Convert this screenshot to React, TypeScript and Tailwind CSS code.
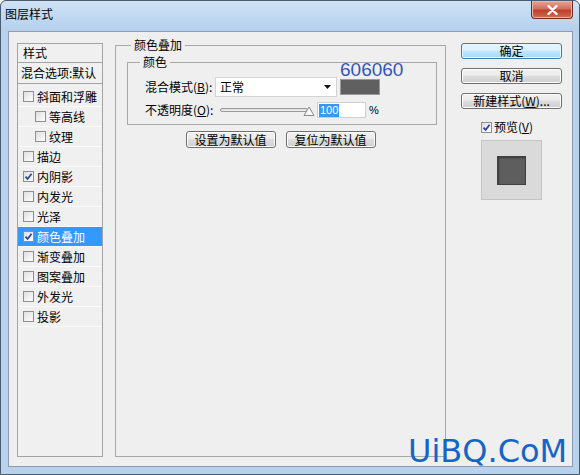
import clsx from "clsx";
import type { ReactNode } from "react";

const cjk = "font-['Noto_Sans_CJK_SC','Liberation_Sans',sans-serif]";

const styleRows = [
  { label: "斜面和浮雕" },
  { label: "等高线", indent: true },
  { label: "纹理", indent: true },
  { label: "描边" },
  { label: "内阴影", checked: true },
  { label: "内发光" },
  { label: "光泽" },
  { label: "颜色叠加", checked: true, active: true },
  { label: "渐变叠加" },
  { label: "图案叠加" },
  { label: "外发光" },
  { label: "投影" },
];

function Check({ checked }: { checked?: boolean }) {
  return (
    <span className="flex h-[11px] w-[11px] shrink-0 items-center justify-center border border-[#8f8f8f] bg-[linear-gradient(135deg,#dedede,#ffffff)]">
      {checked && (
        <svg width="9" height="9" viewBox="0 0 9 9">
          <path d="M1.5 4.6 L3.6 6.9 L7.6 1.8" fill="none" stroke="#23449a" strokeWidth="1.7" />
        </svg>
      )}
    </span>
  );
}

function Btn({ children, primary, className }: { children: ReactNode; primary?: boolean; className?: string }) {
  return (
    <button
      type="button"
      className={clsx(
        "flex items-center justify-center rounded-[3px] border text-[12px] leading-none text-black",
        primary
          ? "border-[#3c7fb1] bg-[linear-gradient(#eaf6fd,#d9f0fc_45%,#bee6fd_50%,#a7d9f5)] shadow-[inset_0_0_0_1px_#e6f6ff]"
          : "border-[#707070] bg-[linear-gradient(#f2f2f2,#ebebeb_45%,#dddddd_50%,#cfcfcf)] shadow-[inset_0_0_0_1px_#fcfcfc]",
        className
      )}
    >
      {children}
    </button>
  );
}

export default function App() {
  return (
    <div className={clsx("h-[475px] w-[580px] bg-white text-[12px] text-black", cjk)}>
      <div className="relative flex h-full flex-col rounded-t-[6px] border border-[#4b5b70] bg-[#b8d2ee]">
        {/* title bar */}
        <div className="h-[30px] shrink-0 rounded-t-[6px] bg-[linear-gradient(#cfe2f6,#bed7f1_60%,#b6d0ec)] pl-[4px] pt-[6px] leading-[14px] text-black">
          图层样式
        </div>
        <div className="absolute right-[6px] top-0 flex h-[18px] w-[42px] items-center justify-center rounded-b-[4px] border border-t-0 border-[#6b2a22] bg-[linear-gradient(#e8a493,#d2705e_45%,#c1402c_55%,#cf6a50)] shadow-[inset_0_0_0_1px_#f0b5a6]">
          <svg width="11" height="10" viewBox="0 0 11 10">
            <path d="M1.5 1 L9.5 9 M9.5 1 L1.5 9" stroke="#ffffff" strokeWidth="2.4" strokeLinecap="round" />
          </svg>
        </div>

        {/* client */}
        <div className="mb-[7px] ml-[7px] mr-[6px] flex flex-1 border border-[#8c9bb0] bg-[#efefef] pl-[8px] pt-[6px]">
          {/* style list */}
          <div className="mt-[5px] flex h-[414px] w-[86px] shrink-0 flex-col border border-[#a3a3a3] bg-[#f0f0f0]">
            <div className="flex h-[19px] items-center border-b border-[#a3a3a3] pl-[5px]">样式</div>
            <div className="flex h-[21px] items-center overflow-hidden whitespace-nowrap border-b border-[#a3a3a3] pl-[3px]">
              混合选项:默认
            </div>
            <div className="pt-[3px]">
              {styleRows.map((r) => (
                <div
                  key={r.label}
                  className={clsx(
                    "flex h-[20px] items-center gap-[3px] whitespace-nowrap border-b border-[#fafafa]",
                    r.indent ? "pl-[17px]" : "pl-[5px]",
                    r.active && "bg-[#3399ff] text-white"
                  )}
                >
                  <Check checked={r.checked} />
                  <span>{r.label}</span>
                </div>
              ))}
            </div>
          </div>

          {/* colour overlay group */}
          <fieldset className="ml-[12px] h-[419px] w-[331px] shrink-0 border border-[#a8a8a8]">
            <legend className="ml-[15px] px-[3px] leading-[14px]">颜色叠加</legend>
            <fieldset className="relative ml-[11px] mt-[3px] h-[70px] w-[310px] border border-[#a8a8a8]">
              <legend className="ml-[12px] px-[3px] leading-[14px]">颜色</legend>
              <div className="absolute left-[212px] top-[-9px] font-['Liberation_Sans',sans-serif] text-[19px] leading-none text-[#3556c0]">
                606060
              </div>
              <div className="mt-[8px] flex items-center pl-[17px]">
                <span className="w-[70px] whitespace-nowrap">
                  混合模式(<span className="underline">B</span>):
                </span>
                <div className="flex h-[20px] w-[122px] items-center justify-between border border-[#d4d4d4] bg-white pl-[4px] pr-[5px]">
                  <span>正常</span>
                  <svg width="7" height="4" viewBox="0 0 7 4">
                    <path d="M0 0 H7 L3.5 4 Z" fill="#111" />
                  </svg>
                </div>
                <div className="ml-[3px] h-[16px] w-[40px] border border-[#9a9a9a] bg-[#606060]" />
              </div>
              <div className="mt-[4px] flex items-center pl-[17px]">
                <span className="w-[73px] whitespace-nowrap">
                  不透明度(<span className="underline">O</span>):
                </span>
                <div className="relative h-[15px] w-[97px]">
                  <div className="absolute left-[2px] top-[5px] h-[4px] w-[88px] rounded-full border border-[#9a9a9a] bg-[linear-gradient(#d8d8d8,#f4f4f4)]" />
                  <svg className="absolute left-[85px] top-[3px]" width="12" height="10" viewBox="0 0 12 10">
                    <path d="M1 9.5 L6 1 L11 9.5 Z" fill="#f7f7f7" stroke="#8a8a8a" strokeWidth="1" strokeLinejoin="round" />
                  </svg>
                </div>
                <div className="ml-[2px] flex h-[16px] w-[49px] items-center border border-[#cfcfcf] bg-white pl-[1px] font-['Liberation_Sans',sans-serif] text-[11px]">
                  <span className="bg-[#3399ff] px-[1px] leading-[13px] text-white">100</span>
                </div>
                <span className="ml-[3px] font-['Liberation_Sans',sans-serif] text-[11px]">%</span>
              </div>
            </fieldset>
            <div className="mt-[6px] flex justify-center gap-[10px]">
              <Btn className="h-[17px] w-[90px]">设置为默认值</Btn>
              <Btn className="h-[17px] w-[90px]">复位为默认值</Btn>
            </div>
          </fieldset>

          {/* right buttons */}
          <div className="ml-[15px] mt-[5px] flex w-[101px] shrink-0 flex-col">
            <Btn primary className="h-[16px] w-full">
              确定
            </Btn>
            <Btn className="mt-[9px] h-[16px] w-full">取消</Btn>
            <Btn className="mt-[9px] h-[16px] w-full">
              新建样式(<span className="underline">W</span>)...
            </Btn>
            <div className="mt-[11px] flex items-center gap-[2px] pl-[20px] leading-[14px]">
              <Check checked />
              <span>
                预览(<span className="underline">V</span>)
              </span>
            </div>
            <div className="ml-[20px] mt-[6px] flex h-[60px] w-[61px] items-center justify-center border border-[#c4c4c4] bg-[#dadada]">
              <div className="h-[29px] w-[29px] border border-[#404040] bg-[#5e5e5e] shadow-[inset_1px_1px_2px_#3a3a3a]" />
            </div>
          </div>
        </div>

        {/* watermark */}
        <div className="absolute left-[407px] top-[434px] font-['DejaVu_Sans',sans-serif] text-[32px] leading-none text-[#1565c8]">
          UiBQ.CoM
        </div>
      </div>
    </div>
  );
}
